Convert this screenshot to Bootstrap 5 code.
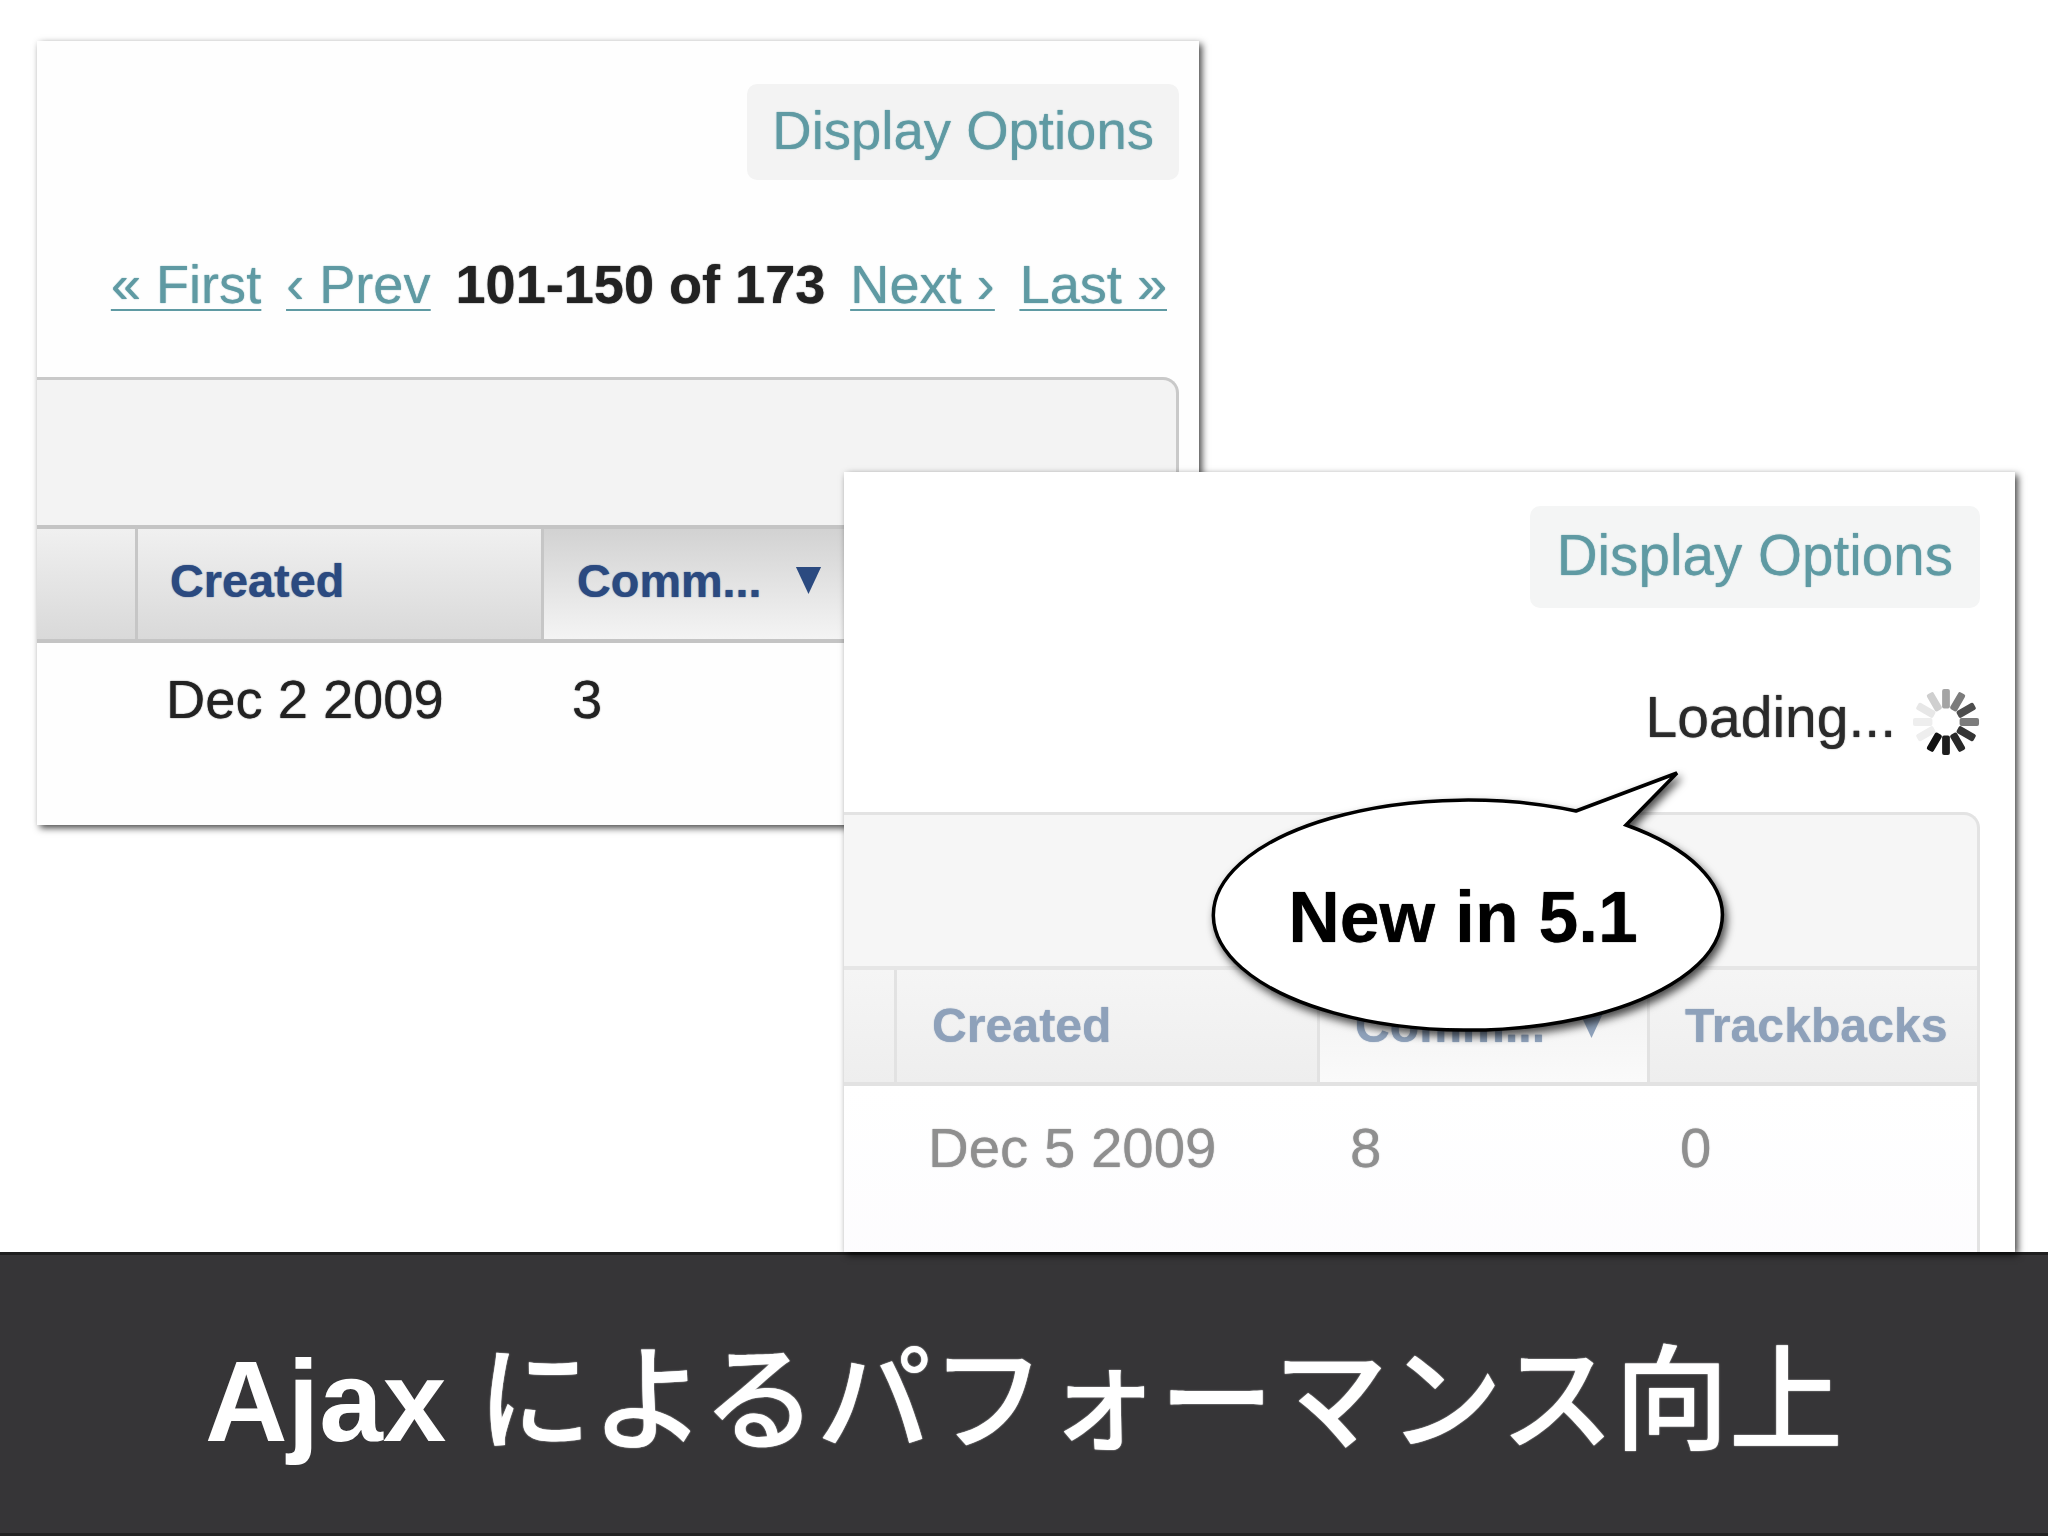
<!DOCTYPE html>
<html lang="ja">
<head>
<meta charset="utf-8">
<title>Ajax によるパフォーマンス向上</title>
<link href="https://cdn.jsdelivr.net/npm/bootstrap@5.3.0/dist/css/bootstrap.min.css" rel="stylesheet">
<style>
html,body{margin:0;height:1536px;background:#fff;overflow:hidden}
body{font-family:"Liberation Sans",Arial,sans-serif;color:#222}
.stage{position:relative;height:1252px}
.win{position:absolute;background:#fefefe;box-shadow:3px 3px 7px rgba(0,0,0,.72);overflow:hidden;z-index:2;text-shadow:0 0 1.2px currentColor}
.win-a{left:37px;top:41px;width:1162px;height:784px;font-size:54.3px;padding:43px 20px 0 0}
.win-b{left:844px;top:472px;width:1171px;height:780px;font-size:56.4px;padding:34px 35px 0 0;background:#fff;z-index:3}
.disp-btn{display:inline-block;background:#f3f3f3;border-radius:10px;color:#5f9aa3;line-height:1;text-decoration:none;padding:20px 25px 22px;height:96px;font-size:54.5px}
.win-b .disp-btn{height:102px;padding:22px 27px 24px;background:#f4f5f5;font-size:56.6px}
.pager{height:197px;padding:12px 12px 0 0;gap:25px;line-height:1;font-size:54.1px}
.pager a{color:#5f9aa3;text-decoration:underline;text-decoration-thickness:2px;text-underline-offset:6px}
.pager strong{color:#222}
.loadrow{height:204px;padding-top:14px;gap:16px;line-height:1;color:#2a2a2a;font-size:57px}
.panel{border:3px solid #c9c9c9;border-left:0;border-bottom:0;border-top-right-radius:16px;background:#f3f3f3}
.win-a .panel{height:400px;padding-top:145px}
.win-b .panel{height:445px;padding-top:151px;border-color:#e3e3e3;background:#f6f6f6}
.hdr,.rowx{display:grid}
.win-a .hdr,.win-a .rowx{grid-template-columns:98px 406px 340px 1fr}
.win-b .hdr,.win-b .rowx{grid-template-columns:50px 423px 330px 1fr}
.hdr{height:118px;border-top:4px solid #c4c4c4;border-bottom:4px solid #c4c4c4;font-weight:700;font-size:46.8px;color:#2b4a80;line-height:1}
.win-b .hdr{font-size:48.2px;color:#8ea1ba;border-top-color:#e6e6e6;border-bottom-color:#e2e2e2;height:120px}
.hcell{background:linear-gradient(#f0f0f0,#d9d9d9);border-left:3px solid #c6c6c6;padding-left:32px;padding-bottom:6px;gap:33px}
.hcell.sorted{background:linear-gradient(#d2d2d2,#f4f4f4);padding-left:33px}
.win-b .hcell{background:linear-gradient(#f5f5f5,#eeeeee);border-left-color:#e2e2e2;padding-left:35px;padding-bottom:2px}
.win-b .hcell.sorted{background:linear-gradient(#f0f0f0,#fafafa)}
.hcell.first{border-left:0}
.rowx{padding-top:30px;line-height:1;background:#fefefe;height:100%}
.rowx>div{padding-left:31px}
.win-b .rowx{background:linear-gradient(#fff,#fbfafd);color:#8f8f8f;padding-top:34px}
.win-b .rowx>div{padding-left:33px}
.win-b .rowx>div:nth-child(2){padding-left:34px}
.tarrow{width:27px;height:29px;flex:none;margin-top:-2px}
.spin{width:68px;height:68px;flex:none;margin-top:10px}
.callout{position:absolute;left:1205px;top:765px;width:540px;height:290px;z-index:4}
.callout svg{display:block;width:540px;height:290px}
.callout-text{position:absolute;left:0;top:38px;width:516px;height:230px;font-size:71.5px;font-weight:700;color:#000;line-height:1;text-shadow:0 0 1px #000}
.caption{height:284px;background:#363537;color:#fff;border-top:3px solid #1f1f1f;border-bottom:3px solid #222;font-family:"Liberation Sans","Noto Sans CJK JP",sans-serif;font-weight:500;font-size:114.3px;line-height:1;padding-top:16px;position:relative;z-index:1;gap:.27em}
.caption b{font-weight:700}
.caption span{text-shadow:0 0 1.5px #fff}
</style>
</head>
<body>
<div class="stage">
  <section class="win win-a">
    <div class="d-flex justify-content-end"><a class="disp-btn" href="#">Display Options</a></div>
    <div class="pager d-flex justify-content-end align-items-center">
      <a href="#">« First</a><a href="#">‹ Prev</a><strong>101-150 of 173</strong><a href="#">Next ›</a><a href="#">Last »</a>
    </div>
    <div class="panel">
      <div class="hdr">
        <div class="hcell first"></div>
        <div class="hcell d-flex align-items-center">Created</div>
        <div class="hcell sorted d-flex align-items-center"><span>Comm...</span><svg class="tarrow" viewBox="0 0 29 29" preserveAspectRatio="none"><path d="M1 1H28L14.500 28Z" fill="#2b4a80"/></svg></div>
        <div class="hcell"></div>
      </div>
      <div class="rowx"><div></div><div>Dec 2 2009</div><div>3</div><div></div></div>
    </div>
  </section>

  <section class="win win-b">
    <div class="d-flex justify-content-end"><a class="disp-btn" href="#">Display Options</a></div>
    <div class="loadrow d-flex justify-content-end align-items-center">
      <span>Loading...</span>
      <svg class="spin" viewBox="0 0 70 70" role="img" aria-label="Loading">
        <g fill="#111">
          <rect x="31" y="1" width="8" height="20" rx="2" opacity=".38"/>
          <rect x="31" y="1" width="8" height="20" rx="2" opacity=".55" transform="rotate(30 35 35)"/>
          <rect x="31" y="1" width="8" height="20" rx="2" opacity=".75" transform="rotate(60 35 35)"/>
          <rect x="31" y="1" width="8" height="20" rx="2" opacity=".55" transform="rotate(90 35 35)"/>
          <rect x="31" y="1" width="8" height="20" rx="2" opacity=".85" transform="rotate(120 35 35)"/>
          <rect x="31" y="1" width="8" height="20" rx="2" opacity=".9" transform="rotate(150 35 35)"/>
          <rect x="31" y="1" width="8" height="20" rx="2" opacity=".95" transform="rotate(180 35 35)"/>
          <rect x="31" y="1" width="8" height="20" rx="2" transform="rotate(210 35 35)"/>
          <rect x="31" y="1" width="8" height="20" rx="2" opacity=".07" transform="rotate(240 35 35)"/>
          <rect x="31" y="1" width="8" height="20" rx="2" opacity=".07" transform="rotate(270 35 35)"/>
          <rect x="31" y="1" width="8" height="20" rx="2" opacity=".1" transform="rotate(300 35 35)"/>
          <rect x="31" y="1" width="8" height="20" rx="2" opacity=".2" transform="rotate(330 35 35)"/>
        </g>
      </svg>
    </div>
    <div class="panel">
      <div class="hdr">
        <div class="hcell first"></div>
        <div class="hcell d-flex align-items-center">Created</div>
        <div class="hcell sorted d-flex align-items-center"><span>Comm...</span><svg class="tarrow" viewBox="0 0 29 29" preserveAspectRatio="none"><path d="M1 1H28L14.500 28Z" fill="#8ea1ba"/></svg></div>
        <div class="hcell d-flex align-items-center">Trackbacks</div>
      </div>
      <div class="rowx"><div></div><div>Dec 5 2009</div><div>8</div><div>0</div></div>
    </div>
  </section>

  <div class="callout">
    <svg viewBox="1205 765 540 290">
      <defs><filter id="sh" x="-10%" y="-10%" width="125%" height="125%"><feDropShadow dx="3" dy="5" stdDeviation="4" flood-color="#000" flood-opacity=".7"/></filter></defs>
      <path d="M1576 811L1677 773L1626 825A254.500 115 0 1 1 1576 811Z" fill="#fff" stroke="#000" stroke-width="3.500" stroke-linejoin="miter" filter="url(#sh)"/>
    </svg>
    <div class="callout-text d-flex align-items-center justify-content-center">New in 5.1</div>
  </div>
</div>
<footer class="caption d-flex align-items-center justify-content-center"><b>Ajax</b><span>によるパフォーマンス向上</span></footer>
<script src="https://cdn.jsdelivr.net/npm/bootstrap@5.3.0/dist/js/bootstrap.bundle.min.js"></script>
</body>
</html>
